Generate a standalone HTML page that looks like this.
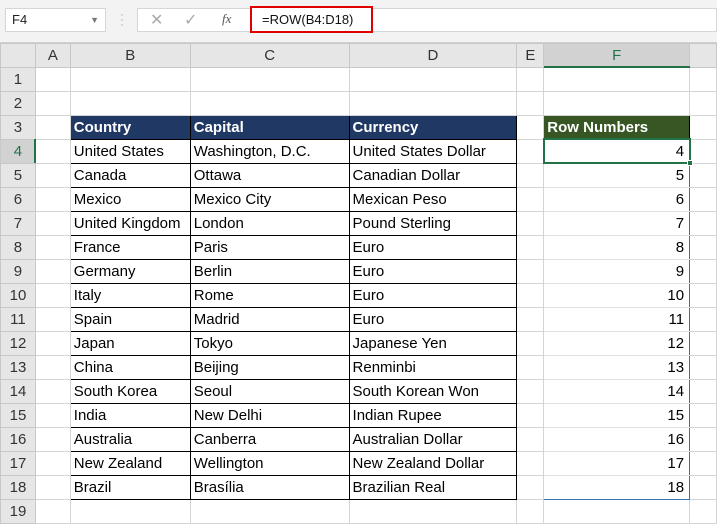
<!DOCTYPE html>
<html><head><meta charset="utf-8"><style>
body{margin:0;width:717px;height:521px;overflow:hidden;background:#fff;font-family:"Liberation Sans",sans-serif;position:relative}
.top{position:absolute;left:0;top:0;width:717px;height:43px;background:#f3f3f3;border-bottom:1px solid #d0d0d0;box-sizing:border-box}
.nb{position:absolute;left:5px;top:8px;width:101px;height:24px;background:#fff;border:1px solid #d6d6d6;box-sizing:border-box;font-size:13px;line-height:22px;padding-left:6px;color:#222}
.fb{position:absolute;left:137px;top:8px;width:580px;height:24px;background:#fff;border:1px solid #d6d6d6;box-sizing:border-box}
.red{position:absolute;left:250px;top:6px;width:123px;height:27px;border:2px solid #e00000;box-sizing:border-box;background:#fff;font-size:13px;line-height:23px;padding-left:10px;color:#111}
table{position:absolute;left:0;top:43px;border-collapse:collapse;table-layout:fixed;font-size:15px}
tr{height:24px}
td{height:23px;padding:0 0 0 3px;border:1px solid #d4d4d4;white-space:nowrap;overflow:hidden;line-height:23px;color:#000;box-sizing:border-box}
tr.h td{background:#e6e6e6;text-align:center;color:#333;padding:0;border-color:#c8c8c8}
td.rh{background:#e6e6e6;text-align:center;color:#333;padding:0;border-color:#c8c8c8}
td.b{border:1px solid #000}
td.hd{background:#203864;color:#fff;font-weight:bold;border:1px solid #000}
td.hf{background:#375623;color:#fff;font-weight:bold;border:1px solid #000}
td.n{text-align:right;padding-right:5px;border-left:1px solid #2f75b5;border-right:1px solid #2f75b5;border-top-color:#e0e0e0;border-bottom-color:#e0e0e0}
.ov{position:absolute;box-sizing:border-box}
</style></head><body>
<div class="top">
<div class="nb">F4<span style="position:absolute;right:6px;top:0;font-size:9px;color:#777">▼</span></div>
<div style="position:absolute;left:120px;top:12px;color:#aaa;font-size:12px;line-height:5px">·<br>·<br>·</div>
<div class="fb">
<span style="position:absolute;left:12px;top:1px;color:#aaa;font-size:16px">✕</span>
<span style="position:absolute;left:46px;top:1px;color:#aaa;font-size:16px">✓</span>
<span style="position:absolute;left:84px;top:2px;color:#555;font-size:13px;font-style:italic;font-family:'Liberation Serif',serif">fx</span>
</div>
<div class="red">=ROW(B4:D18)</div>
</div>
<table>
<colgroup><col style="width:35px"><col style="width:35px"><col style="width:120px"><col style="width:159px"><col style="width:168px"><col style="width:27px"><col style="width:146px"><col style="width:27px"></colgroup>
<tr class="h"><td style="background:#e6e6e6"></td><td>A</td><td>B</td><td>C</td><td>D</td><td>E</td><td style="background:#d2d2d2;color:#217346">F</td><td></td></tr>
<tr><td class="rh">1</td><td></td><td></td><td></td><td></td><td></td><td></td><td></td></tr>
<tr><td class="rh">2</td><td></td><td></td><td></td><td></td><td></td><td></td><td></td></tr>
<tr><td class="rh">3</td><td></td><td class="hd">Country</td><td class="hd">Capital</td><td class="hd">Currency</td><td></td><td class="hf">Row Numbers</td><td></td></tr>
<tr><td class="rh" style="background:#d2d2d2;color:#217346">4</td><td></td><td class="b">United States</td><td class="b">Washington, D.C.</td><td class="b">United States Dollar</td><td></td><td class="n">4</td><td></td></tr>
<tr><td class="rh">5</td><td></td><td class="b">Canada</td><td class="b">Ottawa</td><td class="b">Canadian Dollar</td><td></td><td class="n">5</td><td></td></tr>
<tr><td class="rh">6</td><td></td><td class="b">Mexico</td><td class="b">Mexico City</td><td class="b">Mexican Peso</td><td></td><td class="n">6</td><td></td></tr>
<tr><td class="rh">7</td><td></td><td class="b">United Kingdom</td><td class="b">London</td><td class="b">Pound Sterling</td><td></td><td class="n">7</td><td></td></tr>
<tr><td class="rh">8</td><td></td><td class="b">France</td><td class="b">Paris</td><td class="b">Euro</td><td></td><td class="n">8</td><td></td></tr>
<tr><td class="rh">9</td><td></td><td class="b">Germany</td><td class="b">Berlin</td><td class="b">Euro</td><td></td><td class="n">9</td><td></td></tr>
<tr><td class="rh">10</td><td></td><td class="b">Italy</td><td class="b">Rome</td><td class="b">Euro</td><td></td><td class="n">10</td><td></td></tr>
<tr><td class="rh">11</td><td></td><td class="b">Spain</td><td class="b">Madrid</td><td class="b">Euro</td><td></td><td class="n">11</td><td></td></tr>
<tr><td class="rh">12</td><td></td><td class="b">Japan</td><td class="b">Tokyo</td><td class="b">Japanese Yen</td><td></td><td class="n">12</td><td></td></tr>
<tr><td class="rh">13</td><td></td><td class="b">China</td><td class="b">Beijing</td><td class="b">Renminbi</td><td></td><td class="n">13</td><td></td></tr>
<tr><td class="rh">14</td><td></td><td class="b">South Korea</td><td class="b">Seoul</td><td class="b">South Korean Won</td><td></td><td class="n">14</td><td></td></tr>
<tr><td class="rh">15</td><td></td><td class="b">India</td><td class="b">New Delhi</td><td class="b">Indian Rupee</td><td></td><td class="n">15</td><td></td></tr>
<tr><td class="rh">16</td><td></td><td class="b">Australia</td><td class="b">Canberra</td><td class="b">Australian Dollar</td><td></td><td class="n">16</td><td></td></tr>
<tr><td class="rh">17</td><td></td><td class="b">New Zealand</td><td class="b">Wellington</td><td class="b">New Zealand Dollar</td><td></td><td class="n">17</td><td></td></tr>
<tr><td class="rh">18</td><td></td><td class="b">Brazil</td><td class="b">Brasília</td><td class="b">Brazilian Real</td><td></td><td class="n" style="border-bottom:1px solid #2f75b5">18</td><td></td></tr>
<tr><td class="rh">19</td><td></td><td></td><td></td><td></td><td></td><td></td><td></td></tr>
</table>
<div class="ov" style="left:544px;top:66px;width:146px;height:2px;background:#217346"></div>
<div class="ov" style="left:34px;top:139px;width:2px;height:24px;background:#217346"></div>
<div class="ov" style="left:543px;top:138px;width:148px;height:26px;border:2px solid #217346"></div>
<div class="ov" style="left:687px;top:160px;width:6px;height:6px;background:#217346;border:1px solid #fff"></div>
</body></html>
